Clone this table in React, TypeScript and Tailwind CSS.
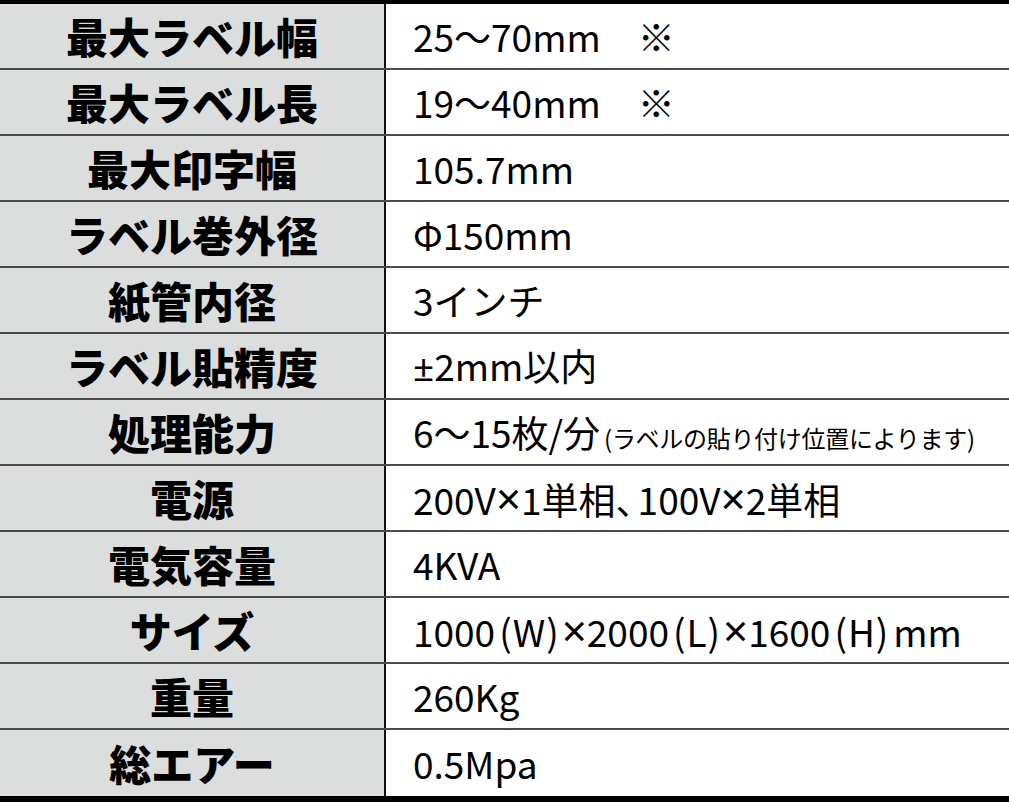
import React from "react";

const X = () => (
  <span className="text-[44px]" style={{ fontFamily: '"Noto Sans", "Liberation Sans", sans-serif' }}>
    ×
  </span>
);

const P = ({ children }: { children: React.ReactNode }) => (
  <span className="ml-[4px] mr-[2px] tracking-[1px]">{children}</span>
);

const rows: { label: string; value: React.ReactNode }[] = [
  { label: "最大ラベル幅", value: "25〜70mm\u3000※" },
  { label: "最大ラベル長", value: "19〜40mm\u3000※" },
  { label: "最大印字幅", value: "105.7mm" },
  { label: "ラベル巻外径", value: "Φ150mm" },
  { label: "紙管内径", value: "3インチ" },
  {
    label: "ラベル貼精度",
    value: (
      <>
        <span style={{ fontFamily: '"Noto Sans", sans-serif' }}>±</span>2mm以内
      </>
    ),
  },
  {
    label: "処理能力",
    value: (
      <>
        6〜15枚/分
        <span className="text-[24px] tracking-[-0.3px] ml-[4px]">(ラベルの貼り付け位置によります)</span>
      </>
    ),
  },
  {
    label: "電源",
    value: (
      <>
        200V<X />1単相<span className="tracking-[-15px]">、</span>100V<X />2単相
      </>
    ),
  },
  { label: "電気容量", value: "4KVA" },
  {
    label: "サイズ",
    value: (
      <>
        1000<P>(W)</P>
        <X />2000<P>(L)</P>
        <X />1600<P>(H)</P>
        <span className="ml-[2px]">mm</span>
      </>
    ),
  },
  { label: "重量", value: "260Kg" },
  { label: "総エアー", value: "0.5Mpa" },
];

export default function App() {
  return (
    <div
      className="w-[1009px] h-[802px] bg-white border-t-4 border-b-[6px] border-black flex flex-col overflow-hidden"
      style={{ fontFamily: '"Noto Sans CJK JP", "Noto Sans", sans-serif' }}
    >
      {rows.map((r, i) => (
        <div
          key={i}
          className={`flex h-[66px] shrink-0 ${i < rows.length - 1 ? "border-b-2 border-[#4a4a4a]" : ""}`}
        >
          <div className="w-[384px] shrink-0 bg-[#dcdddd] flex items-center justify-center text-[42px] font-black text-black leading-none">
            {r.label}
          </div>
          <div className="w-[2px] bg-[#111] shrink-0" />
          <div className="flex-1 flex items-center pl-[27px] text-[37px] font-normal text-black leading-none whitespace-nowrap">
            <span>{r.value}</span>
          </div>
        </div>
      ))}
    </div>
  );
}
